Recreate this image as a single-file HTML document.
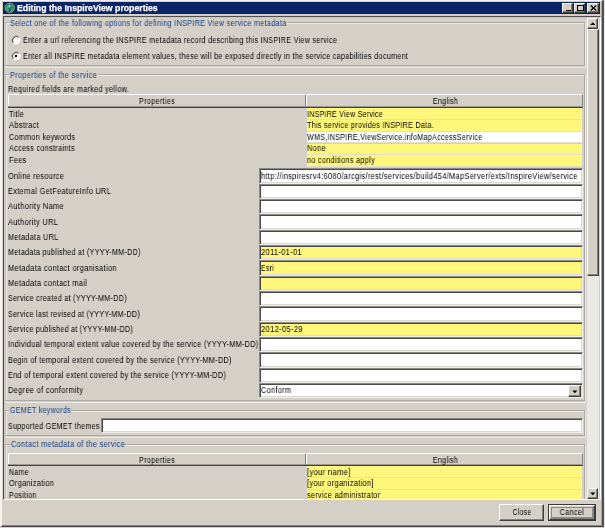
<!DOCTYPE html>
<html><head><meta charset="utf-8"><style>
*{margin:0;padding:0;box-sizing:border-box}
html,body{width:605px;height:528px;overflow:hidden;background:#d4d0c8;font-family:"Liberation Sans",sans-serif;font-size:8.3px;color:#000;position:relative}
.a{position:absolute}
.t{position:absolute;white-space:nowrap;line-height:10px;-webkit-text-stroke:0px #000;letter-spacing:0.35px;will-change:transform}
.inp{position:absolute;background:#fff;border-top:1px solid #8c8985;border-left:1px solid #8c8985;border-bottom:1px solid #f0eeea;border-right:1px solid #f0eeea;box-shadow:inset 1px 1px 0 #4a4a4a, inset -1px -1px 0 #dcd9d4}
.y{background:#fff67c}
.btn3{background:#d4d0c8;border-top:1px solid #fff;border-left:1px solid #fff;border-right:1px solid #404040;border-bottom:1px solid #404040;box-shadow:inset -1px -1px 0 #808080}
.hdr{background:#d4d0c8;border-top:1px solid #fff;border-left:1px solid #fff;border-right:1px solid #808080}
</style></head><body>
<div class="a" style="left:603px;top:0;width:1px;height:527px;background:#2e5a8c"></div>
<div class="a" style="left:604px;top:0;width:1px;height:527px;background:#dfe7f0"></div>
<div class="a" style="left:0;top:0;width:603px;height:527px;border-left:2px solid #f4f3f0;border-top:1px solid #f4f3f0;border-right:1px solid #504c48;border-bottom:1px solid #404040"></div>
<div class="a" style="left:2px;top:1px;width:600px;height:525px;border-right:1px solid #a8a49f;border-bottom:1px solid #8a8782"></div>
<div class="a" style="left:3px;top:2px;width:597px;height:12px;background:#0a246a"></div>
<svg class="a" style="left:4px;top:2.4px" width="12" height="12" viewBox="0 0 12 12">
<circle cx="5.75" cy="5.8" r="5.4" fill="#1f6a8a" stroke="#2a1f1a" stroke-width="0.7"/>
<circle cx="5.75" cy="5.8" r="4.7" fill="none" stroke="#a8c8b0" stroke-width="0.6"/>
<path d="M2.2 4.5 L4 3.2 L5.4 4.6 L4.2 6.2 L5 8 L3.6 9.2 L2.2 7.4 Z" fill="#3cb840"/>
<path d="M6.6 2.2 L8.8 2.8 L9.8 4.6 L8.6 5.8 L7.2 4.6 Z" fill="#30a040"/>
<path d="M7 6.6 L9.4 6.2 L9.6 8 L7.8 9.6 L6.8 8.2 Z" fill="#38b048"/>
<path d="M5.4 6.8 L6.6 7.2 L6.4 9.4 L5 9.6 Z" fill="#1e50c0"/>
<path d="M4.6 2.6 L6.2 3.4 L6.4 5 L5.2 5.4 Z" fill="#e8f4f0"/>
</svg>
<div class="t" style="top:2.92px;left:17px;color:#fff;-webkit-text-stroke-width:0.25px;-webkit-text-stroke-color:#fff;letter-spacing:0;font-weight:bold;font-size:8.6px;transform:scaleX(1.0133);transform-origin:0 0;"><span>Editing the InspireView properties</span></div>
<div class="a btn3" style="left:562px;top:3px;width:11px;height:10px"><div class="a" style="left:2.5px;top:5.5px;width:5px;height:1.6px;background:#000"></div></div>
<div class="a btn3" style="left:573.5px;top:3px;width:11.5px;height:10px"><div class="a" style="left:2px;top:0.8px;width:7px;height:6px;border:1px solid #000;border-top-width:1.6px"></div></div>
<div class="a btn3" style="left:587px;top:3px;width:12px;height:10px"><svg class="a" style="left:2px;top:1.3px" width="7" height="6" viewBox="0 0 7 6"><path d="M0.8 0.5 L6.2 5.5 M6.2 0.5 L0.8 5.5" stroke="#000" stroke-width="1.4"/></svg></div>
<div class="a" style="left:3px;top:16px;width:598px;height:484px;border-left:1px solid #505050;border-top:1px solid #505050;border-right:1px solid #fff;border-bottom:1px solid #fff"></div>
<div class="a" style="left:4px;top:17px;width:596px;height:482px;border-left:1px solid #c8c4bf;border-top:1px solid #c8c4bf"></div>
<div class="a" style="left:5px;top:18px;width:582px;height:481px;overflow:hidden">
<div class="a" style="left:1px;top:5px;width:580px;height:45px;border:1px solid #eceae6"></div>
<div class="a" style="left:0px;top:4px;width:580px;height:44px;border:1px solid #aca8a3;border-left-color:#c0bcb7"></div>
<div class="a" style="left:4.60px;top:0px;width:277.70px;height:8px;background:#d4d0c8"></div>
<div class="t" style="top:0.32px;left:5.3px;color:#163f86;-webkit-text-stroke-color:#163f86;transform:scaleX(0.8703);transform-origin:0 0;"><span>Select one of the following options for defining INSPIRE View service metadata</span></div>
<svg class="a" style="left:5.6px;top:16.6px" width="10" height="10" viewBox="0 0 10 10">
<circle cx="5" cy="5" r="4" fill="#fff"/>
<path d="M8.1 1.9 A4.4 4.4 0 0 0 1.9 8.1" stroke="#a09c98" stroke-width="0.8" fill="none"/>
<path d="M7.6 2.4 A3.7 3.7 0 0 0 2.4 7.6" stroke="#383838" stroke-width="0.9" fill="none"/>
<path d="M8.1 1.9 A4.4 4.4 0 0 1 1.9 8.1" stroke="#f8f7f4" stroke-width="0.8" fill="none"/>

</svg>
<svg class="a" style="left:5.6px;top:33.4px" width="10" height="10" viewBox="0 0 10 10">
<circle cx="5" cy="5" r="4" fill="#fff"/>
<path d="M8.1 1.9 A4.4 4.4 0 0 0 1.9 8.1" stroke="#a09c98" stroke-width="0.8" fill="none"/>
<path d="M7.6 2.4 A3.7 3.7 0 0 0 2.4 7.6" stroke="#383838" stroke-width="0.9" fill="none"/>
<path d="M8.1 1.9 A4.4 4.4 0 0 1 1.9 8.1" stroke="#f8f7f4" stroke-width="0.8" fill="none"/>
<circle cx="5" cy="5" r="1.2" fill="#000"/>
</svg>
<div class="t" style="top:16.82px;left:18.3px;transform:scaleX(0.8622);transform-origin:0 0;"><span>Enter a url referencing the INSPIRE metadata record describing this INSPIRE View service</span></div>
<div class="t" style="top:33.12px;left:18.3px;transform:scaleX(0.8651);transform-origin:0 0;"><span>Enter all INSPIRE metadata element values, these will be exposed directly in the service capabilities document</span></div>
<div class="a" style="left:1px;top:57px;width:580px;height:328px;border:1px solid #eceae6"></div>
<div class="a" style="left:0px;top:56px;width:580px;height:327px;border:1px solid #aca8a3;border-left-color:#c0bcb7"></div>
<div class="a" style="left:4.50px;top:52px;width:88.20px;height:8px;background:#d4d0c8"></div>
<div class="t" style="top:52.32px;left:5.2px;color:#163f86;-webkit-text-stroke-color:#163f86;transform:scaleX(0.8860);transform-origin:0 0;"><span>Properties of the service</span></div>
<div class="t" style="top:66.12px;left:2.9px;transform:scaleX(0.8723);transform-origin:0 0;"><span>Required fields are marked yellow.</span></div>
<div class="a hdr" style="left:3px;top:76.3px;width:298px;height:13.5px"></div>
<div class="a hdr" style="left:301px;top:76.3px;width:277px;height:13.5px"></div>
<div class="a" style="left:3px;top:88.8px;width:575px;height:1px;background:#404040"></div>
<div class="a" style="left:3px;top:87.8px;width:575px;height:1px;background:#9c9894"></div>
<div class="t" style="top:77.92px;left:3px;width:298px;text-align:center;transform:scaleX(0.8711);transform-origin:50% 0;"><span>Properties</span></div>
<div class="t" style="top:77.92px;left:301.5px;width:277px;text-align:center;transform:scaleX(0.8590);transform-origin:50% 0;"><span>English</span></div>
<div class="a" style="left:301.5px;top:90.4px;width:275.79999999999995px;height:10.6px;background:#fff67c"></div>
<div class="a" style="left:301.5px;top:101.0px;width:275.79999999999995px;height:1px;background:#e2dfcf"></div>
<div class="t" style="top:90.62px;left:4px;transform:scaleX(0.8764);transform-origin:0 0;"><span>Title</span></div>
<div class="t" style="top:90.62px;left:301.6px;transform:scaleX(0.8412);transform-origin:0 0;"><span>INSPIRE View Service</span></div>
<div class="a" style="left:301.5px;top:102.1px;width:275.79999999999995px;height:10.6px;background:#fff67c"></div>
<div class="a" style="left:301.5px;top:112.7px;width:275.79999999999995px;height:1px;background:#e2dfcf"></div>
<div class="t" style="top:102.22px;left:4px;transform:scaleX(0.9101);transform-origin:0 0;"><span>Abstract</span></div>
<div class="t" style="top:102.22px;left:301.6px;transform:scaleX(0.8591);transform-origin:0 0;"><span>This service provides INSPIRE Data.</span></div>
<div class="a" style="left:301.5px;top:113.8px;width:275.79999999999995px;height:10.6px;background:#fff"></div>
<div class="a" style="left:301.5px;top:124.4px;width:275.79999999999995px;height:1px;background:#e2dfcf"></div>
<div class="t" style="top:113.82px;left:4px;transform:scaleX(0.8693);transform-origin:0 0;"><span>Common keywords</span></div>
<div class="t" style="top:113.82px;left:301.6px;transform:scaleX(0.8551);transform-origin:0 0;"><span>WMS,INSPIRE,ViewService,infoMapAccessService</span></div>
<div class="a" style="left:301.5px;top:125.5px;width:275.79999999999995px;height:10.6px;background:#fff67c"></div>
<div class="a" style="left:301.5px;top:136.1px;width:275.79999999999995px;height:1px;background:#e2dfcf"></div>
<div class="t" style="top:125.42px;left:4px;transform:scaleX(0.8719);transform-origin:0 0;"><span>Access constraints</span></div>
<div class="t" style="top:125.42px;left:301.6px;transform:scaleX(0.8953);transform-origin:0 0;"><span>None</span></div>
<div class="a" style="left:301.5px;top:137.2px;width:275.79999999999995px;height:10.6px;background:#fff67c"></div>
<div class="a" style="left:301.5px;top:147.8px;width:275.79999999999995px;height:1px;background:#e2dfcf"></div>
<div class="t" style="top:137.02px;left:4px;transform:scaleX(0.8819);transform-origin:0 0;"><span>Fees</span></div>
<div class="t" style="top:137.02px;left:301.6px;transform:scaleX(0.8754);transform-origin:0 0;"><span>no conditions apply</span></div>
<div class="t" style="top:152.62px;left:3px;transform:scaleX(0.8807);transform-origin:0 0;"><span>Online resource</span></div>
<div class="a inp" style="left:254px;top:150.2px;width:324px;height:15.34px"></div>
<div class="t" style="top:152.62px;left:256px;transform:scaleX(0.8961);transform-origin:0 0;"><span>http://inspiresrv4:6080/arcgis/rest/services/build454/MapServer/exts/InspireView/service</span></div>
<div class="t" style="top:167.96px;left:3px;transform:scaleX(0.8812);transform-origin:0 0;"><span>External GetFeatureInfo URL</span></div>
<div class="a inp" style="left:254px;top:165.54px;width:324px;height:15.34px"></div>
<div class="t" style="top:183.30px;left:3px;transform:scaleX(0.9041);transform-origin:0 0;"><span>Authority Name</span></div>
<div class="a inp" style="left:254px;top:180.88px;width:324px;height:15.34px"></div>
<div class="t" style="top:198.64px;left:3px;transform:scaleX(0.8919);transform-origin:0 0;"><span>Authority URL</span></div>
<div class="a inp" style="left:254px;top:196.22px;width:324px;height:15.34px"></div>
<div class="t" style="top:213.98px;left:3px;transform:scaleX(0.8753);transform-origin:0 0;"><span>Metadata URL</span></div>
<div class="a inp" style="left:254px;top:211.56px;width:324px;height:15.34px"></div>
<div class="t" style="top:229.32px;left:3px;transform:scaleX(0.8611);transform-origin:0 0;"><span>Metadata published at (YYYY-MM-DD)</span></div>
<div class="a inp y" style="left:254px;top:226.9px;width:324px;height:15.34px"></div>
<div class="t" style="top:229.32px;left:256px;transform:scaleX(0.9054);transform-origin:0 0;"><span>2011-01-01</span></div>
<div class="t" style="top:244.66px;left:3px;transform:scaleX(0.8971);transform-origin:0 0;"><span>Metadata contact organisation</span></div>
<div class="a inp y" style="left:254px;top:242.24px;width:324px;height:15.34px"></div>
<div class="t" style="top:244.66px;left:256px;transform:scaleX(0.8246);transform-origin:0 0;"><span>Esri</span></div>
<div class="t" style="top:260.00px;left:3px;transform:scaleX(0.8938);transform-origin:0 0;"><span>Metadata contact mail</span></div>
<div class="a inp y" style="left:254px;top:257.58px;width:324px;height:15.34px"></div>
<div class="t" style="top:275.34px;left:3px;transform:scaleX(0.8599);transform-origin:0 0;"><span>Service created at (YYYY-MM-DD)</span></div>
<div class="a inp" style="left:254px;top:272.92px;width:324px;height:15.34px"></div>
<div class="t" style="top:290.68px;left:3px;transform:scaleX(0.8560);transform-origin:0 0;"><span>Service last revised at (YYYY-MM-DD)</span></div>
<div class="a inp" style="left:254px;top:288.26px;width:324px;height:15.34px"></div>
<div class="t" style="top:306.02px;left:3px;transform:scaleX(0.8513);transform-origin:0 0;"><span>Service published at (YYYY-MM-DD)</span></div>
<div class="a inp y" style="left:254px;top:303.6px;width:324px;height:15.34px"></div>
<div class="t" style="top:306.02px;left:256px;transform:scaleX(0.9107);transform-origin:0 0;"><span>2012-05-29</span></div>
<div class="t" style="top:321.36px;left:3px;transform:scaleX(0.8748);transform-origin:0 0;"><span>Individual temporal extent value covered by the service (YYYY-MM-DD)</span></div>
<div class="a inp" style="left:254px;top:318.94px;width:324px;height:15.34px"></div>
<div class="t" style="top:336.70px;left:3px;transform:scaleX(0.8711);transform-origin:0 0;"><span>Begin of temporal extent covered by the service (YYYY-MM-DD)</span></div>
<div class="a inp" style="left:254px;top:334.28px;width:324px;height:15.34px"></div>
<div class="t" style="top:352.04px;left:3px;transform:scaleX(0.8733);transform-origin:0 0;"><span>End of temporal extent covered by the service (YYYY-MM-DD)</span></div>
<div class="a inp" style="left:254px;top:349.62px;width:324px;height:15.34px"></div>
<div class="t" style="top:367.38px;left:3px;transform:scaleX(0.8966);transform-origin:0 0;"><span>Degree of conformity</span></div>
<div class="a inp" style="left:254px;top:364.96px;width:324px;height:15.34px"></div>
<div class="t" style="top:367.38px;left:256px;transform:scaleX(0.8854);transform-origin:0 0;"><span>Conform</span></div>
<div class="a btn3" style="left:563px;top:366.96px;width:13px;height:11.8px"><svg class="a" style="left:0;top:0" width="12" height="11" viewBox="0 0 12 11"><path d="M3.3 4.6 L8.5 4.6 L5.9 7.3 Z" fill="#000"/></svg></div>
<div class="a" style="left:1px;top:393px;width:580px;height:27px;border:1px solid #eceae6"></div>
<div class="a" style="left:0px;top:392px;width:580px;height:26px;border:1px solid #aca8a3;border-left-color:#c0bcb7"></div>
<div class="a" style="left:4.20px;top:388px;width:62.20px;height:8px;background:#d4d0c8"></div>
<div class="t" style="top:386.82px;left:4.9px;color:#163f86;-webkit-text-stroke-color:#163f86;transform:scaleX(0.8516);transform-origin:0 0;"><span>GEMET keywords</span></div>
<div class="t" style="top:402.72px;left:3px;transform:scaleX(0.8555);transform-origin:0 0;"><span>Supported GEMET themes</span></div>
<div class="a inp" style="left:96px;top:400.3px;width:482px;height:15px"></div>
<div class="a" style="left:1px;top:427px;width:580px;height:77px;border:1px solid #eceae6"></div>
<div class="a" style="left:0px;top:426px;width:580px;height:76px;border:1px solid #aca8a3;border-left-color:#c0bcb7"></div>
<div class="a" style="left:4.90px;top:422px;width:115.40px;height:8px;background:#d4d0c8"></div>
<div class="t" style="top:420.72px;left:5.6px;color:#163f86;-webkit-text-stroke-color:#163f86;transform:scaleX(0.8924);transform-origin:0 0;"><span>Contact metadata of the service</span></div>
<div class="a hdr" style="left:3px;top:435.2px;width:298px;height:12.600000000000023px"></div>
<div class="a hdr" style="left:301px;top:435.2px;width:277px;height:12.600000000000023px"></div>
<div class="a" style="left:3px;top:446.8px;width:575px;height:1px;background:#404040"></div>
<div class="a" style="left:3px;top:445.8px;width:575px;height:1px;background:#9c9894"></div>
<div class="t" style="top:436.82px;left:3px;width:298px;text-align:center;transform:scaleX(0.8711);transform-origin:50% 0;"><span>Properties</span></div>
<div class="t" style="top:436.82px;left:301.5px;width:277px;text-align:center;transform:scaleX(0.8590);transform-origin:50% 0;"><span>English</span></div>
<div class="a" style="left:301.5px;top:448.3px;width:275.79999999999995px;height:10.6px;background:#fff67c"></div>
<div class="a" style="left:301.5px;top:458.9px;width:275.79999999999995px;height:1px;background:#e2dfcf"></div>
<div class="t" style="top:448.82px;left:4px;transform:scaleX(0.8483);transform-origin:0 0;"><span>Name</span></div>
<div class="t" style="top:448.82px;left:301.6px;transform:scaleX(0.9178);transform-origin:0 0;"><span>[your name]</span></div>
<div class="a" style="left:301.5px;top:460.0px;width:275.79999999999995px;height:10.6px;background:#fff67c"></div>
<div class="a" style="left:301.5px;top:470.6px;width:275.79999999999995px;height:1px;background:#e2dfcf"></div>
<div class="t" style="top:460.37px;left:4px;transform:scaleX(0.8822);transform-origin:0 0;"><span>Organization</span></div>
<div class="t" style="top:460.37px;left:301.6px;transform:scaleX(0.8919);transform-origin:0 0;"><span>[your organization]</span></div>
<div class="a" style="left:301.5px;top:471.7px;width:275.79999999999995px;height:10.6px;background:#fff67c"></div>
<div class="a" style="left:301.5px;top:482.3px;width:275.79999999999995px;height:1px;background:#e2dfcf"></div>
<div class="t" style="top:471.92px;left:4px;transform:scaleX(0.8564);transform-origin:0 0;"><span>Position</span></div>
<div class="t" style="top:471.92px;left:301.6px;transform:scaleX(0.8750);transform-origin:0 0;"><span>service administrator</span></div>
</div>
<div class="a" style="left:587px;top:18px;width:12px;height:481px;background:#ebe9e5"></div>
<div class="a btn3" style="left:587.3px;top:17.5px;width:11px;height:11px"><svg class="a" style="left:0;top:0" width="10" height="10" viewBox="0 0 10 10"><path d="M2.2 6 L7.4 6 L4.8 3.3 Z" fill="#000"/></svg></div>
<div class="a btn3" style="left:587px;top:28.5px;width:11.5px;height:247px"></div>
<div class="a btn3" style="left:587.3px;top:488px;width:11px;height:11px"><svg class="a" style="left:0;top:0" width="10" height="10" viewBox="0 0 10 10"><path d="M2.2 3.6 L7.4 3.6 L4.8 6.3 Z" fill="#000"/></svg></div>
<div class="a btn3" style="left:499px;top:504px;width:45px;height:17px"></div>
<div class="t" style="top:507.32px;left:499.5px;width:44px;text-align:center;transform:scaleX(0.8250);transform-origin:50% 0;"><span>Close</span></div>
<div class="a" style="left:547.5px;top:504px;width:48.5px;height:17px;border:1px solid #383838;border-bottom-width:1.5px"></div>
<div class="a btn3" style="left:548.5px;top:505px;width:46.5px;height:15px"></div>
<div class="a" style="left:551px;top:507px;width:42px;height:11px;border:1px solid #8e8c88"></div>
<div class="t" style="top:507.32px;left:548px;width:48px;text-align:center;transform:scaleX(0.8773);transform-origin:50% 0;"><span>Cancel</span></div>
</body></html>
